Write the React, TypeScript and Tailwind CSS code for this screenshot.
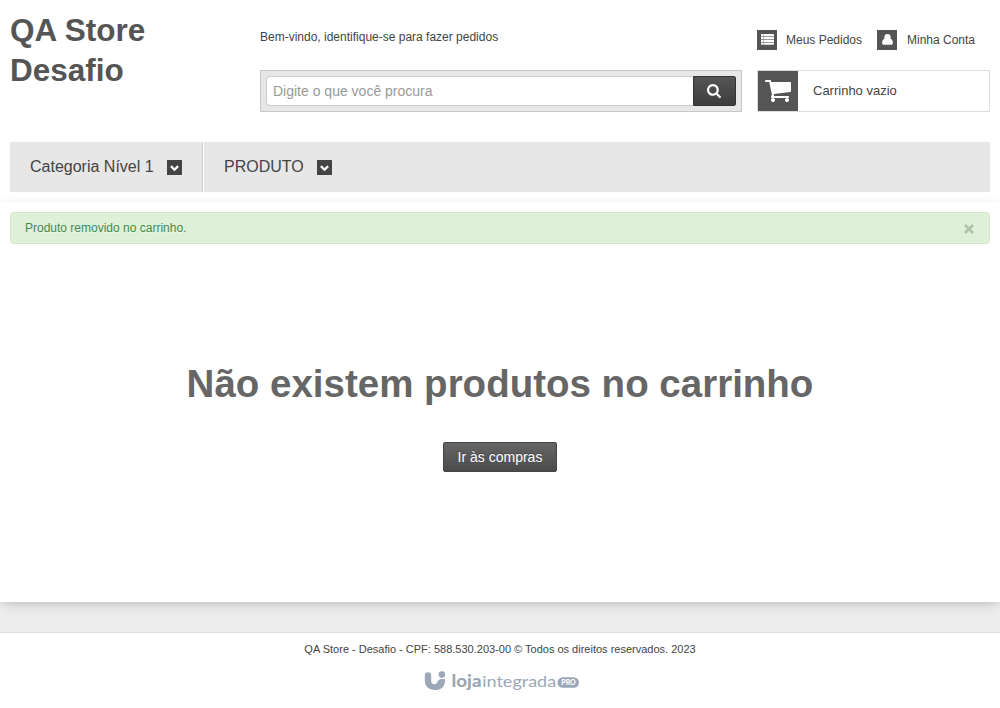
import React from "react";

const SearchIcon = () => (
  <svg viewBox="0 0 1792 1792" className="mb-[2px] h-[15px] w-[15px]" fill="currentColor">
    <path d="M1152 832q0-185-131.5-316.5t-316.5-131.5-316.5 131.5-131.5 316.5 131.5 316.5 316.5 131.5 316.5-131.5 131.5-316.5zm512 832q0 52-38 90t-90 38q-54 0-90-38l-343-342q-179 124-399 124-143 0-273.5-55.5t-225-150-150-225-55.5-273.5 55.5-273.5 150-225 225-150 273.5-55.5 273.5 55.5 225 150 150 225 55.5 273.5q0 220-124 399l343 343q37 37 37 90z" />
  </svg>
);

const CartIcon = () => (
  <svg viewBox="0 0 1792 1792" className="mb-[2px] h-[28px] w-[28px]" fill="currentColor">
    <path d="M704 1536q0 52-38 90t-90 38-90-38-38-90 38-90 90-38 90 38 38 90zm896 0q0 52-38 90t-90 38-90-38-38-90 38-90 90-38 90 38 38 90zm128-1088v512q0 24-16.5 42.5t-40.5 21.5l-1044 122q13 60 13 70 0 16-24 64h920q26 0 45 19t19 45-19 45-45 19h-1024q-26 0-45-19t-19-45q0-11 8-31.5t16-36 21.5-40 15.5-29.5l-177-823h-204q-26 0-45-19t-19-45 19-45 45-19h256q16 0 28.5 6.5t19.5 15.5 13 24.5 8 26 5.5 29.5 4.5 26h1201q26 0 45 19t19 45z" />
  </svg>
);

const ListIcon = () => (
  <svg viewBox="0 0 20 20" className="h-5 w-5" fill="#fff">
    <rect x="4" y="4" width="13" height="10.8" rx=".8" />
    <path d="M4 6.5h13M4 9.5h13M4 12.5h13" stroke="#555" strokeWidth=".6" />
    <path d="M6.5 4v11" stroke="#555" strokeWidth=".35" />
  </svg>
);

const UserIcon = () => (
  <svg viewBox="0 0 20 20" className="h-5 w-5" fill="#fff">
    <ellipse cx="10.5" cy="7.2" rx="3.1" ry="3.3" />
    <path d="M7.5 8.4C6 9.2 5.1 11 5.1 13c0 1.1.8 1.8 1.8 1.8h7.2c1 0 1.8-.7 1.8-1.8 0-2-.9-3.8-2.4-4.6z" />
  </svg>
);

const Chevron = () => (
  <span className="flex h-[15px] w-[15px] bg-[#444]">
    <svg viewBox="0 0 15 15" className="h-[15px] w-[15px]" fill="none" stroke="#fff" strokeWidth="2.3">
      <path d="M3.9 6.1l3.6 3.6 3.6-3.6" />
    </svg>
  </span>
);

const BrandLogo = () => (
  <div className="flex h-5 text-[#9ba8b7]">
    <svg viewBox="0 0 156 20" className="h-5 w-[156px]" fill="currentColor">
      <path d="M4 1.2a3.2 3.2 0 0 1 3.2 3.2V10c0 2 1.3 3.2 3 3.2 2.2 0 2.6-1.2 3.4-2.8 1-1.6 2.4-2.3 4.2-2.3H21v1.8c0 5.8-4.2 9.1-10 9.1-6 0-10.2-3.6-10.2-9.4V4.4A3.2 3.2 0 0 1 4 1.2z" />
      <circle cx="17.9" cy="3.6" r="3.3" />
      <text x="27.5" y="15.5" textLength="30" lengthAdjust="spacingAndGlyphs" fontFamily="Lato, sans-serif" fontSize="16" fontWeight="900">loja</text>
      <text x="58.2" y="15.5" textLength="74" lengthAdjust="spacingAndGlyphs" fontFamily="Lato, sans-serif" fontSize="16">integrada</text>
      <rect x="133.5" y="6.2" width="21.5" height="10.6" rx="5.3" />
      <text x="137.3" y="14" textLength="14.4" lengthAdjust="spacingAndGlyphs" fill="#fff" fontFamily="Lato, sans-serif" fontSize="6.6" fontWeight="900">PRO</text>
    </svg>
  </div>
);

export default function App() {
  return (
    <div className="flex h-[708px] w-[1000px] flex-col overflow-hidden bg-white font-['Liberation_Sans',Arial,sans-serif] text-[12px] leading-5 text-[#444]">
      <header className="h-[202px] px-[10px]">
        <div className="flex h-[142px] pt-[10px]">
          <h1 className="w-[250px] shrink-0 pr-[60px] text-[31.5px] leading-10 font-bold text-[#555]">QA Store Desafio</h1>
          <div className="w-[482px]">
            <p className="h-[60px] pt-[17px]">Bem-vindo, identifique-se para fazer pedidos</p>
            <div className="flex h-[42px] border border-[#c8c8c8] bg-[#e7e7e7] p-[5px]">
              <div className="flex h-[30px] flex-1 items-center rounded-l-[4px] border border-r-0 border-[#ccc] bg-white pl-[6px] text-[14px] text-[#999]">Digite o que você procura</div>
              <button className="flex h-[30px] w-[43px] items-center justify-center rounded-r-[2px] border border-[#333] bg-linear-to-b from-[#555] to-[#3d3d3d] text-white"><SearchIcon /></button>
            </div>
          </div>
          <div className="ml-[15px] w-[233px]">
            <div className="flex h-[60px] pt-5">
              <a className="flex h-5 w-[120px] gap-[9px]"><span className="h-5 w-5 bg-[#555]"><ListIcon /></span>Meus Pedidos</a>
              <a className="flex h-5 gap-[10px]"><span className="h-5 w-5 bg-[#555]"><UserIcon /></span>Minha Conta</a>
            </div>
            <div className="flex h-[42px] items-center border border-[#ddd]">
              <span className="flex h-10 w-10 items-center justify-center bg-[#555] text-white"><CartIcon /></span>
              <span className="pl-[15px] text-[13px]">Carrinho vazio</span>
            </div>
          </div>
        </div>
        <nav className="flex h-[50px] bg-[#e7e7e7] text-[16px]">
          <a className="flex w-[193px] items-center gap-[13px] border-r border-[#ccc] pl-5"><span className="w-[124px] whitespace-nowrap">Categoria Nível 1</span><Chevron /></a>
          <a className="flex items-center gap-[13px] border-l border-white pl-5"><span className="w-[80px]">PRODUTO</span><Chevron /></a>
        </nav>
      </header>
      <main className="relative h-[400px] bg-white px-[10px] pt-[10px] shadow-[0_6px_12px_-4px_rgba(0,0,0,0.18),0_0_8px_rgba(0,0,0,0.06)]">
        <div className="flex h-8 items-center justify-between rounded-[4px] border border-[#d0e9c1] bg-[#dff0d8] pr-[15px] pl-[14px] text-[#468847] [text-shadow:0_1px_0_rgba(255,255,255,.5)]">
          <span>Produto removido no carrinho.</span>
          <svg viewBox="0 0 10 10" className="mt-[2px] h-[10px] w-[10px]" stroke="#b2c0ad" strokeWidth="2.6"><path d="M1 1l8 8M9 1L1 9" /></svg>
        </div>
        <h2 className="pt-[120px] text-center text-[38.5px] leading-10 font-bold text-[#666]">Não existem produtos no carrinho</h2>
        <div className="flex justify-center pt-[38px]">
          <button className="h-[30px] w-[114px] rounded-[2px] border border-[#444] bg-linear-to-b from-[#666] to-[#4b4b4b] text-[14px] text-white [text-shadow:0_-1px_0_rgba(0,0,0,.25)]">Ir às compras</button>
        </div>
      </main>
      <div className="h-[31px] border-b border-[#ddd] bg-[#ededed]" />
      <footer className="flex flex-1 flex-col items-center bg-white pt-[6px] text-[11px]">
        <p className="h-[32px]">QA Store - Desafio - CPF: 588.530.203-00 © Todos os direitos reservados. 2023</p>
        <div className="pl-[4px]"><BrandLogo /></div>
      </footer>
    </div>
  );
}
